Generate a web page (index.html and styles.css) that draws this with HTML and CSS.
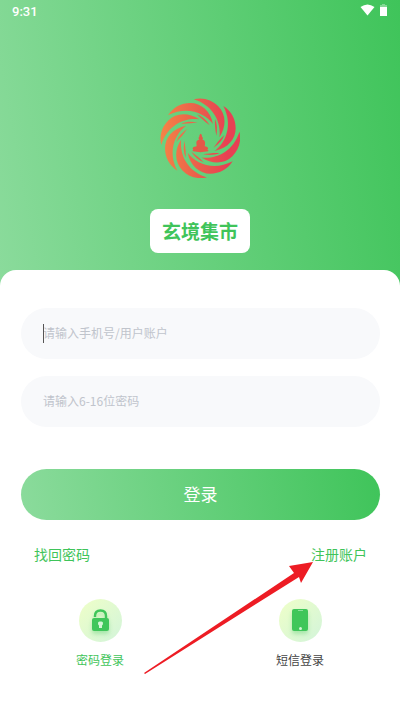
FILE: index.html
```html
<!DOCTYPE html>
<html lang="zh-CN">
<head>
    <meta charset="UTF-8">
    <meta name="viewport" content="width=device-width, initial-scale=1.0">
    <title>玄境集市</title>
    <link rel="stylesheet" href="styles.css">
</head>
<body>
    <header class="header">
        <div class="status-bar">
            <span class="time">9:31</span>
            <div class="status-icons">
                <svg width="16" height="12" viewBox="0 0 16 12" aria-hidden="true">
                    <path d="M0.5 3 Q7.500 -2 14.500 3 L7.500 11.500 Z" fill="#fff"/>
                </svg>
                <svg width="7" height="12" viewBox="0 0 7 12" aria-hidden="true">
                    <path d="M2 0 H5 V1 H7 V3 H0 V1 H2 Z" fill="#fff" opacity="0.35"/>
                    <rect y="3" width="7" height="9" fill="#fff"/>
                </svg>
            </div>
        </div>
        <svg class="logo" viewBox="30 30 240 240" role="img" aria-label="玄境集市">
            <defs>
                <linearGradient id="flame" x1="0" y1="0" x2="1" y2="0">
                    <stop offset="0" stop-color="#f58446"/>
                    <stop offset="0.450" stop-color="#ea614b"/>
                    <stop offset="0.850" stop-color="#e84053"/>
                </linearGradient>
                <g id="blade">
                    <path d="M54 82 C70 57 94 45 121 45 C153 45 181 68 189 108 C164 75 112 52 54 82 Z"/>
                    <path d="M93 107 C108 100 125 100 143 103 C127 106 110 108 93 107 Z"/>
                </g>
                <mask id="wheel" maskUnits="userSpaceOnUse" x="30" y="30" width="240" height="240">
                    <g fill="#fff">
                        <use href="#blade"/>
                        <use href="#blade" transform="rotate(45 151 151)"/>
                        <use href="#blade" transform="rotate(90 151 151)"/>
                        <use href="#blade" transform="rotate(135 151 151)"/>
                        <use href="#blade" transform="rotate(180 151 151)"/>
                        <use href="#blade" transform="rotate(225 151 151)"/>
                        <use href="#blade" transform="rotate(270 151 151)"/>
                        <use href="#blade" transform="rotate(315 151 151)"/>
                    </g>
                </mask>
            </defs>
            <rect x="30" y="30" width="240" height="240" fill="url(#flame)" mask="url(#wheel)"/>
            <path d="M152 137 C155 139 156 142 156 146 C160 148 159 153 157 155 C165 156 166 162 165 170 L164 175 C174 177 177 181 172 185 Q178 187 174 190 Q151 195 129 190 Q125 188 130 185 C125 181 130 176 140 175 L139 164 C139 158 142 156 148 155 C145 152 145 148 148 146 C148 142 149 139 152 137 Z" fill="#e45848"/>
        </svg>
        <h1 class="app-name">玄境集市</h1>
    </header>

    <main class="card">
        <form class="login-form">
            <div class="field-box focused">
                <input class="field" type="text" placeholder="请输入手机号/用户账户" aria-label="手机号/用户账户">
            </div>
            <div class="field-box">
                <input class="field" type="password" placeholder="请输入6-16位密码" aria-label="密码">
            </div>
            <button class="login-button" type="button">登录</button>
        </form>
        <nav class="links">
            <a href="#">找回密码</a>
            <a href="#" class="register">注册账户
                <svg class="arrow" width="170" height="112" viewBox="0 0 170 112" aria-hidden="true">
                    <path d="M0 111 L150 11 L145 4 L169 0 L157 21 L155 15 L1 112 Z" fill="#ed1c24"/>
                </svg>
            </a>
        </nav>
        <div class="methods">
            <button class="method active" type="button">
                <span class="method-icon">
                    <svg width="43" height="43" viewBox="0 0 43 43" aria-hidden="true">
                        <path d="M16 18 V17 Q16 11.500 21.500 11.500 Q27 11.500 27 17 V19" fill="none" stroke="#3fc65a" stroke-width="2.400"/>
                        <rect x="13" y="19" width="17" height="13" rx="2" fill="#3fc65a"/>
                        <path d="M19 24 Q19 22.500 20.500 22.500 H22.500 Q24 22.500 24 24 Q24 26 23 26.500 V29 H20 V26.500 Q19 26 19 24 Z" fill="#d3f5d6"/>
                    </svg>
                </span>
                密码登录
            </button>
            <button class="method" type="button">
                <span class="method-icon">
                    <svg width="43" height="43" viewBox="0 0 43 43" aria-hidden="true">
                        <rect x="13" y="10" width="16" height="22" rx="2" fill="#3fc65a"/>
                        <rect x="19" y="11" width="5" height="1" fill="#8be09b"/>
                        <circle cx="21.500" cy="29.500" r="1.500" fill="#d3f5d6"/>
                    </svg>
                </span>
                短信登录
            </button>
        </div>
    </main>
</body>
</html>
```

FILE: styles.css
```css
* {
    box-sizing: border-box;
}
body {
    margin: 0;
    min-height: 100vh;
    display: flex;
    flex-direction: column;
    font-family: "Noto Sans CJK SC", sans-serif;
    background-color: #fff;
}
.header {
    display: flex;
    flex-direction: column;
    align-items: center;
    padding-bottom: 47px;
    background: linear-gradient(80deg, #8bdb9c, #3fc45a);
}
.status-bar {
    align-self: stretch;
    display: flex;
    justify-content: space-between;
    align-items: center;
    height: 22px;
    padding: 0 13px 0 12px;
    color: #fff;
}
.time {
    font-family: Roboto, sans-serif;
    font-size: 13px;
    font-weight: 500;
}
.status-icons {
    display: flex;
    gap: 4px;
    padding-bottom: 2px;
}
.logo {
    width: 80px;
    height: 80px;
    margin: 76px 0 31px;
}
.app-name {
    margin: 0;
    padding: 0 12px;
    border-radius: 8px;
    background-color: #fff;
    color: #3fc45a;
    font-size: 19px;
    font-weight: 700;
    line-height: 44px;
}
.card {
    flex: 1;
    margin-top: -30px;
    padding: 38px 20px 40px 21px;
    border-radius: 16px 16px 0 0;
    background-color: #fff;
}
.login-form {
    display: flex;
    flex-direction: column;
    gap: 17px;
}
.field-box {
    position: relative;
    display: flex;
}
/* text cursor of the active field */
.field-box.focused::before {
    content: "";
    position: absolute;
    top: 16px;
    left: 22px;
    width: 1px;
    height: 19px;
    background-color: #555;
}
.field {
    width: 100%;
    height: 51px;
    padding: 0 22px 2px;
    border: none;
    outline: none;
    border-radius: 26px;
    background-color: #f8f9fb;
    font-family: inherit;
    font-size: 12px;
    color: #333;
    caret-color: #555;
}
.field::placeholder {
    color: #c0c4cc;
}
.login-button {
    height: 51px;
    margin-top: 25px;
    padding: 0 0 2px;
    border: none;
    border-radius: 26px;
    background: linear-gradient(80deg, #8bdb9c, #3fc45a);
    color: #fff;
    font-family: inherit;
    font-size: 17px;
}
.links {
    display: flex;
    justify-content: space-between;
    margin-top: 22px;
    padding: 0 13px;
    font-size: 14px;
    line-height: 24px;
}
.links a {
    color: #3fc45a;
    text-decoration: none;
}
.register {
    position: relative;
}
.arrow {
    position: absolute;
    top: 20px;
    right: 53px;
    pointer-events: none;
}
.methods {
    display: grid;
    grid-template-columns: 1fr 1fr;
    margin: 33px -20px 0 -21px;
}
.method {
    display: flex;
    flex-direction: column;
    align-items: center;
    gap: 8px;
    padding: 0;
    border: none;
    background: none;
    color: #444;
    font-family: inherit;
    font-size: 12px;
    line-height: 20px;
}
.method.active {
    color: #3fc45a;
}
.method-icon {
    display: flex;
    border-radius: 50%;
    background: linear-gradient(135deg, #efffc8, #d2f4da);
}
.method-icon svg {
    filter: drop-shadow(0 3px 2px rgba(63, 198, 90, 0.35));
}
```
